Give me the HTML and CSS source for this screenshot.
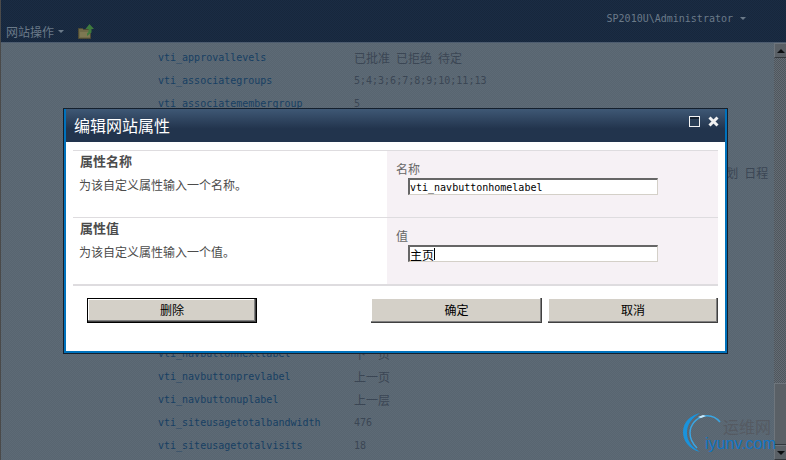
FILE: index.html
```html
<!DOCTYPE html>
<html lang="zh-CN">
  <head>
    <meta charset="UTF-8" />
    <title>编辑网站属性</title>
    <link rel="stylesheet" href="styles.css">
  </head>
  <body>
    <!-- Ribbon, dimmed behind the dialog -->
    <header class="top-bar">
      <div class="site-actions">
        <span>网站操作</span>
        <i class="caret"></i>
        <svg class="folder-icon" width="16" height="15" viewBox="0 0 16 15">
          <path d="M0.500 4.500h4l1 1h7v9h-12z" fill="#6e6a48" stroke="#4d4a35" />
          <path d="M2 8h10v5H2z" fill="#7d7852" />
          <path d="M11.500 0L16 5h-2.500v3.500L9 12V9.500l1.500-1.500V5H7.500z" fill="#3f7a3d" />
        </svg>
      </div>
      <div class="user-menu">
        <span>SP2010U\Administrator</span>
        <i class="caret"></i>
      </div>
    </header>

    <main class="page">
      <div class="content">
        <ul class="prop-list">
          <li><a>vti_approvallevels</a><span class="cn">已批准 已拒绝 待定</span></li>
          <li><a>vti_associategroups</a><span>5;4;3;6;7;8;9;10;11;13</span></li>
          <li><a>vti_associatemembergroup</a><span>5</span></li>
          <li><a>vti_associateownergroup</a><span>3</span></li>
          <li><a>vti_associatevisitorgroup</a><span>4</span></li>
          <li><a>vti_categories</a><span class="cn">公告 联系 讨论 文档 事件 链接 列表 任务 调查 网站 页面 图片 计划 日程</span></li>
        </ul>
        <ul class="prop-list prop-list-bottom">
          <li><a>vti_navbuttonnextlabel</a><span class="cn">下一页</span></li>
          <li><a>vti_navbuttonprevlabel</a><span class="cn">上一页</span></li>
          <li><a>vti_navbuttonuplabel</a><span class="cn">上一层</span></li>
          <li><a>vti_siteusagetotalbandwidth</a><span>476</span></li>
          <li><a>vti_siteusagetotalvisits</a><span>18</span></li>
        </ul>
      </div>
      <div class="scrollbar">
        <div class="scroll-btn"><i class="arrow-up"></i></div>
        <div class="scroll-track"></div>
        <div class="scroll-thumb"></div>
        <div class="scroll-btn"><i class="arrow-down"></i></div>
      </div>
    </main>

    <!-- Dialog -->
    <div class="dialog">
      <div class="dialog-title">
        <h1>编辑网站属性</h1>
        <svg class="dialog-icon" width="11" height="11" viewBox="0 0 11 11">
          <rect x="0.500" y="0.500" width="10" height="10" fill="#2b3f57" stroke="#f2f2f2" />
          <rect x="1" y="1" width="9" height="2" fill="#14202e" />
        </svg>
        <svg class="dialog-icon" width="11" height="11" viewBox="0 0 11 11">
          <path d="M1.500 1.500l8 8M9.500 1.500l-8 8" stroke="#f2f2f2" stroke-width="3" />
        </svg>
      </div>
      <div class="dialog-body">
        <section class="form-row">
          <div class="form-desc">
            <h2>属性名称</h2>
            <p>为该自定义属性输入一个名称。</p>
          </div>
          <div class="form-field">
            <label>名称</label>
            <div class="text-input">vti_navbuttonhomelabel</div>
          </div>
        </section>
        <section class="form-row">
          <div class="form-desc">
            <h2>属性值</h2>
            <p>为该自定义属性输入一个值。</p>
          </div>
          <div class="form-field">
            <label>值</label>
            <div class="text-input text-input-cn">主页<i class="text-caret"></i></div>
          </div>
        </section>
        <div class="form-buttons">
          <button class="btn btn-default">删除</button>
          <div class="btn-group">
            <button class="btn btn-wide">确定</button>
            <button class="btn">取消</button>
          </div>
        </div>
      </div>
    </div>

    <!-- Watermark -->
    <div class="watermark">
      <svg class="watermark-logo" width="38" height="40" viewBox="0 0 38 40">
        <path d="M17 39C6 36 0 28 0 19 0 9 8 2 17 0 9 5 4 11 4 20c0 8 5 14 13 19z" fill="#1a93dc" />
        <path d="M37 9C33 4 27 2 21 3 13 5 7 12 7 20c0 6 3 11 7 15" fill="none" stroke="#3aa5e2" stroke-width="1.500" />
        <path d="M15 4l5-2 3 1-5 2z" fill="#cbeafb" />
      </svg>
      <span class="watermark-cn">运维网</span>
      <span class="watermark-en">iyunv.com</span>
    </div>
  </body>
</html>
```

FILE: styles.css
```css
/* Basic reset */
* {
  box-sizing: border-box;
}

html,
body {
  height: 100%;
}

body {
  margin: 0;
  overflow: hidden;
  position: relative;
  display: flex;
  flex-direction: column;
  background-color: #5d6a76;
  border-left: 1px solid #4a4a4a;
  font-family: "DejaVu Sans Mono", "Noto Sans CJK SC", monospace;
  font-size: 10px;
}

h1,
h2,
p,
ul {
  margin: 0;
  padding: 0;
}

/* Top bar */
.top-bar {
  flex: none;
  height: 43px;
  padding: 0 40px 0 5px;
  display: flex;
  justify-content: space-between;
  background-color: #1a2c44;
  background-image: repeating-conic-gradient(rgba(0, 0, 0, 0.12) 0 25%, transparent 0 50%);
  background-size: 2px 2px;
  border-bottom: 1px solid #4d5c6f;
  color: #6b7a89;
}

.site-actions {
  display: flex;
  align-items: center;
  height: 17px;
  margin-top: 23px;
  font-family: "Noto Sans CJK SC", sans-serif;
  font-size: 12px;
}

.site-actions .caret {
  margin-left: 4px;
}

.folder-icon {
  margin-left: 14px;
  margin-top: 0;
}

.user-menu {
  display: flex;
  align-items: center;
  height: 12px;
  margin-top: 12px;
}

.user-menu .caret {
  margin-left: 7px;
}

.caret {
  width: 0;
  height: 0;
  border: 3px solid transparent;
  border-top-color: #6b7a89;
  border-bottom-width: 0;
}

/* Page behind the dialog */
.page {
  flex: 1;
  display: flex;
  min-height: 0;
}

.content {
  flex: 1;
  padding: 3px 0 0 157px;
  background-image: repeating-conic-gradient(rgba(0, 0, 0, 0.05) 0 25%, transparent 0 50%);
  background-size: 2px 2px;
  overflow: hidden;
}

.prop-list {
  list-style: none;
}

.prop-list-bottom {
  margin-top: 158px;
}

.prop-list li {
  display: flex;
  align-items: center;
  height: 23px;
  white-space: nowrap;
  color: #3b4654;
}

.prop-list a {
  flex: none;
  width: 196px;
  color: #173f63;
}

.prop-list .cn {
  font-size: 12px;
  word-spacing: -1.2px;
}

/* Scrollbar */
.scrollbar {
  flex: none;
  width: 12px;
  display: flex;
  flex-direction: column;
  background-color: #646c74;
  background-image: repeating-conic-gradient(#4f565d 0 25%, transparent 0 50%);
  background-size: 2px 2px;
}

.scroll-btn {
  height: 15px;
  display: flex;
  align-items: center;
  justify-content: center;
  background-color: #5a6066;
  border-top: 1px solid #6e757c;
  border-left: 1px solid #6e757c;
  border-bottom: 1px solid #33383d;
}

.scroll-track {
  flex: 1;
}

.scroll-thumb {
  height: 62px;
  background-color: #5a6066;
  border-top: 1px solid #6e757c;
  border-left: 1px solid #6e757c;
  border-bottom: 1px solid #33383d;
}

.arrow-up,
.arrow-down {
  width: 0;
  height: 0;
  border: 4px solid transparent;
}

.arrow-up {
  border-top-width: 0;
  border-bottom-color: #0c0f12;
}

.arrow-down {
  border-bottom-width: 0;
  border-top-color: #0c0f12;
}

/* Dialog */
.dialog {
  position: absolute;
  top: 108px;
  left: 62px;
  width: 665px;
  height: 246px;
  border: 1px solid #14202e;
  display: flex;
  flex-direction: column;
  background-color: #fff;
}

.dialog-title {
  flex: none;
  height: 33px;
  padding: 0 6px 2px 8px;
  display: flex;
  align-items: center;
  gap: 8px;
  background: linear-gradient(#3f5875, #22344d 60%);
  border: solid #0072bc;
  border-width: 0 2px;
}

.dialog-title h1 {
  flex: 1;
  font-family: "Noto Sans CJK SC", sans-serif;
  font-size: 16px;
  font-weight: normal;
  color: #fff;
}

.dialog-icon {
  flex: none;
  align-self: flex-start;
  margin-top: 7px;
}

.dialog-body {
  flex: 1;
  padding: 8px 7px 0;
  border: solid #0072bc;
  border-width: 0 2px 2px;
  font-family: "Noto Sans CJK SC", sans-serif;
  font-size: 12px;
  color: #4c4c4c;
}

.form-row {
  display: flex;
  height: 67px;
  border-top: 1px solid #dedcdf;
}

.form-desc {
  width: 314px;
  padding-left: 6px;
}

.form-desc h2 {
  font-size: 13px;
  line-height: 20px;
  padding-left: 1px;
}

.form-desc p {
  margin-top: 5px;
  line-height: 18px;
}

.form-field {
  flex: 1;
  padding: 9px 0 0 9px;
  background-color: #f6f1f5;
}

.form-field label {
  display: block;
  margin-bottom: 1px;
  line-height: 17px;
  color: #666;
}

.text-input {
  width: 250px;
  height: 17px;
  margin-left: 12px;
  display: flex;
  align-items: center;
  background-color: #fff;
  border: 1px solid #d4d0c8;
  border-top: 2px solid #666;
  border-left: 2px solid #666;
  font-family: "DejaVu Sans Mono", "Noto Sans CJK SC", monospace;
  font-size: 10px;
  color: #000;
}

.text-input-cn {
  font-size: 12px;
}

.text-caret {
  width: 1px;
  height: 12px;
  background-color: #000;
}

.form-buttons {
  display: flex;
  justify-content: space-between;
  height: 40px;
  padding: 12px 0 0 14px;
  border-top: 2px solid #dedcdf;
}

.btn-group {
  display: flex;
  gap: 6px;
}

.btn {
  width: 170px;
  height: 25px;
  padding: 0 0 3px;
  background-color: #d4d0c8;
  border: none;
  box-shadow: inset -1px -1px 0 #404040, inset -2px -2px 0 #808080, inset 1px 1px 0 #fff;
  font-family: "Noto Sans CJK SC", sans-serif;
  font-size: 12px;
  color: #000;
}

.btn-wide {
  width: 171px;
}

.btn-default {
  border: 1px solid #000;
}

/* Watermark */
.watermark {
  position: absolute;
  top: 413px;
  left: 682px;
  width: 100px;
  height: 44px;
}

.watermark-logo {
  position: absolute;
  top: 0;
  left: 0;
}

.watermark-cn {
  position: absolute;
  top: 2px;
  left: 40px;
  font-family: "Noto Sans CJK SC", sans-serif;
  font-size: 16px;
  line-height: 22px;
  color: #555a62;
}

.watermark-en {
  position: absolute;
  top: 22px;
  left: 22px;
  font-family: "Liberation Sans", sans-serif;
  font-size: 16px;
  line-height: 18px;
  color: #1175c4;
}
```
